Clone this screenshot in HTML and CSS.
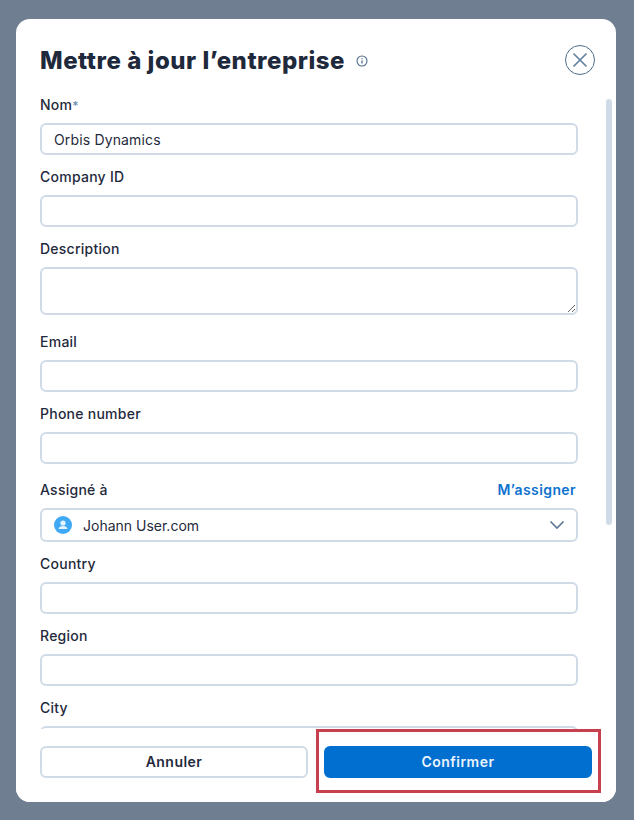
FILE: index.html
```html
<!DOCTYPE html>
<html lang="fr">
<head>
<meta charset="utf-8">
<title>Mettre à jour l’entreprise</title>
<link rel="stylesheet" href="styles.css">
</head>
<body>
<div class="dialog">
  <header class="head">
    <h1 class="title">Mettre à jour l’entreprise</h1>
    <svg class="info" width="12" height="12" viewBox="0 0 12 12" fill="none" stroke="#4f6b8a" aria-hidden="true">
      <circle cx="6" cy="6" r="5" stroke-width="1.1"/>
      <path d="M6 5.4v3" stroke-width="1.3"/>
      <path d="M6 3.2v1" stroke-width="1.3"/>
    </svg>
    <button class="close" type="button" aria-label="Fermer">
      <svg width="30" height="30" viewBox="0 0 30 30" fill="none" aria-hidden="true">
        <circle cx="15" cy="15" r="14.5" stroke="#4f6b8a"/>
        <path d="M8.5 8.5l13 13M21.5 8.5l-13 13" stroke="#5f7f9f" stroke-width="1.6"/>
      </svg>
    </button>
  </header>
  <div class="body">
    <form class="form">
      <div class="field"><label class="label">Nom<span class="req">*</span></label><input class="input" value="Orbis Dynamics"></div>
      <div class="field"><label class="label">Company ID</label><input class="input"></div>
      <div class="field"><label class="label">Description</label><textarea class="input area"></textarea></div>
      <div class="field"><label class="label">Email</label><input class="input"></div>
      <div class="field field-assign"><label class="label">Phone number</label><input class="input"></div>
      <div class="field">
        <div class="label-row"><label class="label">Assigné à</label><a class="link">M’assigner</a></div>
        <div class="select">
          <svg class="avatar" width="18" height="18" viewBox="0 0 18 18" aria-hidden="true">
            <circle cx="9" cy="9" r="9" fill="#3fa9f5"/>
            <circle cx="9" cy="7" r="2.6" fill="#e6f4fe"/>
            <path d="M4.6 13c0-2 2-3 4.4-3s4.4 1 4.4 3z" fill="#e6f4fe"/>
          </svg>
          <span class="select-text">Johann User.com</span>
          <svg class="chev" width="16" height="10" viewBox="0 0 16 10" fill="none" aria-hidden="true">
            <path d="M1.5 1.5L8 8l6.5-6.5" stroke="#5f7a99" stroke-width="1.7"/>
          </svg>
        </div>
      </div>
      <div class="field"><label class="label">Country</label><input class="input"></div>
      <div class="field"><label class="label">Region</label><input class="input"></div>
      <div class="field"><label class="label">City</label><input class="input"></div>
    </form>
    <div class="scrollbar"></div>
  </div>
  <footer class="foot">
    <button class="btn btn-ghost" type="button">Annuler</button>
    <button class="btn btn-primary" type="button">Confirmer</button>
  </footer>
  <div class="highlight"></div>
</div>
</body>
</html>
```
FILE: styles.css
```css
* { box-sizing: border-box; }
html, body { margin: 0; height: 100%; }
body {
  width: 634px;
  height: 820px;
  overflow: hidden;
  background: #6f7f91;
  font-family: "Inter", "Noto Sans", sans-serif;
  color: #1f2a3c;
  padding: 19px 18px 18px 16px;
}
.dialog {
  position: relative;
  width: 600px;
  height: 783px;
  background: #fff;
  border-radius: 14px;
  overflow: hidden;
  display: flex;
  flex-direction: column;
}
.head {
  display: flex;
  align-items: center;
  height: 78px;
  flex: none;
  padding: 4px 21px 0 24px;
}
.title {
  margin: 0;
  font-family: "Inter", sans-serif;
  font-size: 24px;
  font-weight: 800;
  letter-spacing: 0.52px;
  color: #1e293b;
  white-space: nowrap;
}
.info { margin-left: 11px; margin-top: 2px; flex: none; }
.close {
  margin-left: auto;
  padding: 0;
  border: 0;
  background: none;
  width: 30px;
  height: 30px;
}
.close svg { display: block; }
.body {
  position: relative;
  flex: 1;
  min-height: 0;
  overflow: hidden;
}
.form {
  padding: 0 38px 0 24px;
  display: flex;
  flex-direction: column;
  gap: 14px;
}
.field { display: flex; flex-direction: column; }
.field-assign { margin-bottom: 4px; }
.label {
  display: block;
  height: 26px;
  line-height: 16px;
  font-size: 14px;
  font-weight: 500;
  letter-spacing: 0.25px;
  color: #1f2a3c;
}
.req { color: #6f8fae; font-size: 12px; }
.label-row { display: flex; justify-content: space-between; padding-right: 2px; }
.link { color: #0d72cf; font-size: 14px; font-weight: 600; line-height: 16px; letter-spacing: 0.4px; }
.input {
  display: block;
  width: 100%;
  height: 32px;
  padding: 0 12px;
  border: 2px solid #d0dbe7;
  border-radius: 6px;
  background: #fff;
  font: 400 14px "Inter", sans-serif;
  letter-spacing: 0.15px;
  color: #1f2a3c;
  outline: none;
}
.area { height: 48px; resize: vertical; padding: 6px 12px; margin-bottom: 5px; }
.select {
  height: 34px;
  display: flex;
  align-items: center;
  padding: 0 11px 0 12px;
  border: 2px solid #d0dbe7;
  border-radius: 6px;
  font-size: 14px;
}
.avatar { flex: none; }
.select-text { margin-left: 11px; }
.chev { margin-left: auto; flex: none; }
.scrollbar {
  position: absolute;
  top: 2px;
  right: 4px;
  width: 6px;
  height: 426px;
  border-radius: 3px;
  background: #d0dbe7;
}
.foot {
  flex: none;
  height: 73px;
  background: #fff;
  padding: 17px 24px 0;
  display: flex;
  gap: 16px;
}
.btn {
  flex: 1 1 0;
  min-width: 0;
  height: 32px;
  padding: 0 0 1px;
  border: 2px solid #d0dbe7;
  border-radius: 6px;
  font: 600 14px "Inter", sans-serif;
  letter-spacing: 0.45px;
}
.btn-ghost { background: #fff; color: #1f2a3c; }
.btn-primary { background: #006fcf; border-color: #006fcf; color: #eaf4fd; }
.highlight {
  position: absolute;
  left: 300px;
  top: 710px;
  width: 285px;
  height: 64px;
  border: 3px solid #c8404f;
  pointer-events: none;
}
```
